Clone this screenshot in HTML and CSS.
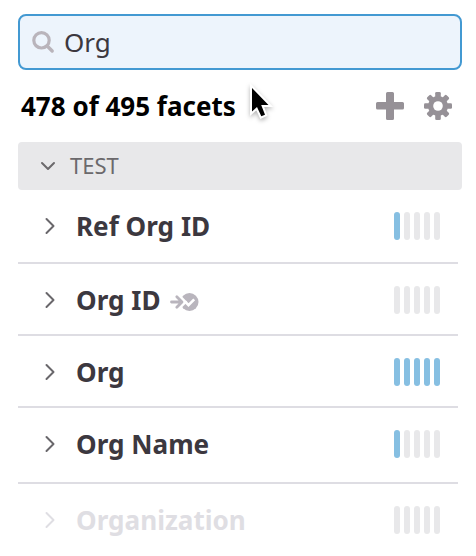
FILE: index.html
```html
<!DOCTYPE html>
<html lang="en">
<head>
<meta charset="utf-8">
<title>Facets</title>
<link rel="stylesheet" href="styles.css">
</head>
<body>
<main class="panel">
  <div class="search">
    <svg class="search-icon" width="24" height="24" viewBox="0 0 24 24"><circle cx="9.500" cy="10.300" r="7.700" fill="none" stroke="currentColor" stroke-width="3.200"/><path d="M15.200 16l5 5" stroke="currentColor" stroke-width="3.400" stroke-linecap="round"/></svg>
    <span class="query">Org</span>
  </div>
  <div class="toolbar">
    <span class="count">478 of 495 facets</span>
    <svg class="tool" width="28" height="28" viewBox="0 0 28 28"><path fill="currentColor" d="M11.500 0h5a1.500 1.500 0 0 1 1.500 1.500V10h8.500A1.500 1.500 0 0 1 28 11.500v4.500a1.500 1.500 0 0 1-1.500 1.500H18v9a1.500 1.500 0 0 1-1.500 1.500h-5a1.500 1.500 0 0 1-1.500-1.500v-9H1.500A1.500 1.500 0 0 1 0 16v-4.500A1.500 1.500 0 0 1 1.500 10H10V1.500A1.500 1.500 0 0 1 11.500 0z"/></svg>
    <svg class="tool" width="28" height="28" viewBox="-14 -14 28 28"><g fill="currentColor"><g id="teeth"><rect x="-2.800" y="-14" width="5.600" height="28" rx="1.300"/><rect x="-14" y="-2.800" width="28" height="5.600" rx="1.300"/></g><use href="#teeth" transform="rotate(45) scale(.98)"/><circle r="10"/></g><circle r="4.800" fill="#fff"/></svg>
  </div>
  <div class="group">
    <svg class="fold" width="16" height="10" viewBox="0 0 16 10"><path class="line" d="M2 2l6 6 6-6"/></svg>
    <span class="group-name">TEST</span>
  </div>
  <ul class="facets">
    <li class="facet facet-first">
      <svg class="chevron" width="12" height="18" viewBox="0 0 12 18"><path class="line" d="M2.500 2l7 7-7 7"/></svg>
      <span class="name">Ref Org ID</span>
      <span class="meter"><i class="on"></i><i></i><i></i><i></i><i></i></span>
    </li>
    <li class="facet">
      <svg class="chevron" width="12" height="18" viewBox="0 0 12 18"><path class="line" d="M2.500 2l7 7-7 7"/></svg>
      <span class="name">Org ID</span>
      <svg class="mapped" width="30" height="20" viewBox="0 0 30 20"><circle cx="19.500" cy="12" r="9" fill="currentColor"/><path d="M4 12h10M7.500 5l7 7-7 7" fill="none" stroke="#fff" stroke-width="4"/><path d="M1.500 12h9.500M6.800 6.800L12 12l-5.200 5.200" fill="none" stroke="currentColor" stroke-width="2.800" stroke-linecap="round" stroke-linejoin="round"/><path d="M15 11.500l3.500 3.700 5.700-5.900" fill="none" stroke="#fff" stroke-width="2.600"/></svg>
      <span class="meter"><i></i><i></i><i></i><i></i><i></i></span>
    </li>
    <li class="facet">
      <svg class="chevron" width="12" height="18" viewBox="0 0 12 18"><path class="line" d="M2.500 2l7 7-7 7"/></svg>
      <span class="name">Org</span>
      <span class="meter"><i class="on"></i><i class="on"></i><i class="on"></i><i class="on"></i><i class="on"></i></span>
    </li>
    <li class="facet facet-tall">
      <svg class="chevron" width="12" height="18" viewBox="0 0 12 18"><path class="line" d="M2.500 2l7 7-7 7"/></svg>
      <span class="name">Org Name</span>
      <span class="meter"><i class="on"></i><i></i><i></i><i></i><i></i></span>
    </li>
    <li class="facet facet-empty">
      <svg class="chevron" width="12" height="18" viewBox="0 0 12 18"><path class="line" d="M2.500 2l7 7-7 7"/></svg>
      <span class="name">Organization</span>
      <span class="meter"><i></i><i></i><i></i><i></i><i></i></span>
    </li>
  </ul>
</main>
<svg class="pointer" width="30" height="42" viewBox="0 0 30 42"><path d="M5 6v23.500l5-4.500 4.300 9.300 3.700-1.600L14.200 23H21.500z" fill="#000" stroke="#fff" stroke-width="4" paint-order="stroke"/></svg>
</body>
</html>
```
FILE: styles.css
```css
* { box-sizing: border-box; }
body {
  margin: 0;
  background: #fff;
  font-family: "Noto Sans", sans-serif;
  font-size: 26px;
  color: #3c383f;
}
svg { display: block; flex: none; }
.panel { padding: 14px 14px 0 18px; height: 556px; overflow: hidden; }
.search {
  display: flex;
  align-items: center;
  height: 56px;
  padding-left: 12px;
  border: 2px solid #4399d2;
  border-radius: 8px;
  background: #edf4fc;
}
.search-icon { color: #b9b4bb; }
.query { margin-left: 8px; }
.toolbar {
  display: flex;
  align-items: center;
  height: 72px;
  padding: 0 10px 0 3px;
  gap: 20px;
}
.count { flex: 1; color: #000; font-weight: 700; }
.tool { color: #969197; }
.group {
  display: flex;
  align-items: center;
  height: 48px;
  padding-left: 22px;
  border-radius: 4px;
  background: #e8e8ea;
  color: #6b696c;
  font-size: 22px;
}
.group-name { padding-bottom: 2px; }
.fold { margin-right: 14px; }
.line { fill: none; stroke: currentColor; stroke-width: 2; stroke-linecap: round; stroke-linejoin: round; }
.facets { list-style: none; margin: 0; padding: 0 4px 0 0; }
.facet {
  display: flex;
  align-items: center;
  height: 72px;
  padding: 2px 18px 0 26px;
  border-bottom: 2px solid #dedde3;
}
.facet-first { height: 74px; padding-top: 0; }
.facet-tall { height: 76px; padding-bottom: 4px; }
.facet-empty { border: 0; padding-top: 0; color: #dfdee3; }
.chevron { color: #69676b; }
.facet-empty .chevron { color: inherit; }
.name { margin-left: 20px; font-size: 26.1px; font-weight: 700; }
.mapped { margin-left: 9px; color: #b9b5bd; overflow: visible; }
.meter { display: flex; gap: 4px; margin-left: auto; }
.meter i { width: 6px; height: 28px; border-radius: 3px; background: #e8e8ea; }
.meter .on { background: #86bfe2; }
.pointer {
  position: absolute;
  left: 247px;
  top: 82px;
  filter: drop-shadow(0 2px 2px rgba(0, 0, 0, .3));
}
```
